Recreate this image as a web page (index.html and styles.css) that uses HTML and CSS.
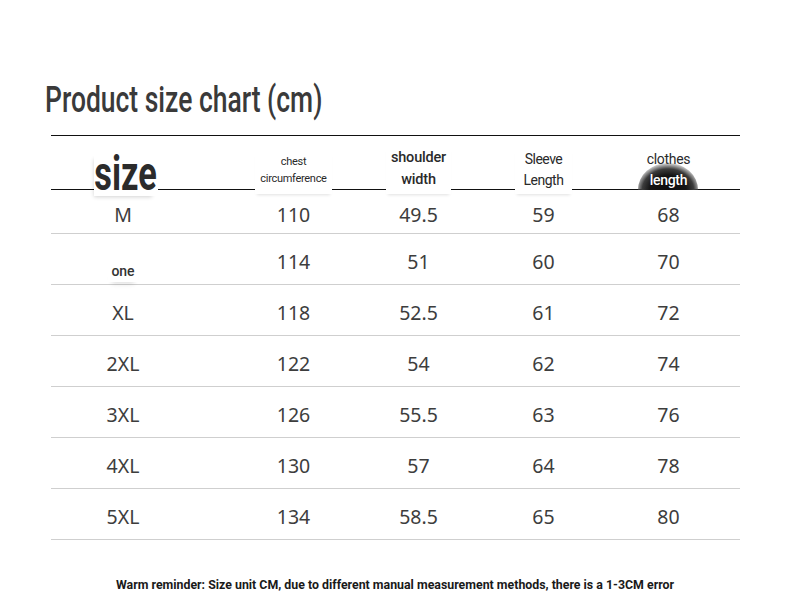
FILE: index.html
```html
<!DOCTYPE html>
<html lang="en">
<head>
<meta charset="utf-8">
<title>Product size chart</title>
<link rel="stylesheet" href="styles.css">
</head>
<body>
<main class="page">
  <h1 class="title"><span class="squeeze">Product size chart (cm)</span></h1>
  <div class="chart">
    <div class="row head">
      <div class="cell first"><span class="lbl big"><span class="squeeze-big">size</span></span></div>
      <div class="cell"><span class="lbl tiny">chest<br>circumference</span></div>
      <div class="cell"><span class="lbl mid">shoulder<br>width</span></div>
      <div class="cell"><span class="lbl small">Sleeve<br>Length</span></div>
      <div class="cell"><span class="lbl small clothes">clothes<br><span class="mound">length</span></span></div>
    </div>
    <div class="row data top">
      <div class="cell first">M</div><div class="cell">110</div><div class="cell">49.5</div><div class="cell">59</div><div class="cell">68</div>
    </div>
    <div class="row data">
      <div class="cell first"><span class="one">one</span></div><div class="cell">114</div><div class="cell">51</div><div class="cell">60</div><div class="cell">70</div>
    </div>
    <div class="row data">
      <div class="cell first">XL</div><div class="cell">118</div><div class="cell">52.5</div><div class="cell">61</div><div class="cell">72</div>
    </div>
    <div class="row data">
      <div class="cell first">2XL</div><div class="cell">122</div><div class="cell">54</div><div class="cell">62</div><div class="cell">74</div>
    </div>
    <div class="row data">
      <div class="cell first">3XL</div><div class="cell">126</div><div class="cell">55.5</div><div class="cell">63</div><div class="cell">76</div>
    </div>
    <div class="row data">
      <div class="cell first">4XL</div><div class="cell">130</div><div class="cell">57</div><div class="cell">64</div><div class="cell">78</div>
    </div>
    <div class="row data">
      <div class="cell first">5XL</div><div class="cell">134</div><div class="cell">58.5</div><div class="cell">65</div><div class="cell">80</div>
    </div>
  </div>
  <p class="note">Warm reminder: Size unit CM, due to different manual measurement methods, there is a 1-3CM error</p>
</main>
</body>
</html>
```

FILE: styles.css
```css
html, body {
  margin: 0;
  background: #fff;
}

.page {
  padding-top: 80px;
  font-family: Roboto, "Liberation Sans", sans-serif;
}

.title {
  margin: 0 0 0 45px;
  font-size: 36px;
  line-height: 40px;
  font-weight: 500;
  color: #3a3a3a;
  white-space: nowrap;
}

.squeeze {
  display: inline-block;
  transform: scaleX(0.735);
  transform-origin: left center;
}

.chart {
  margin: 15px 0 0 51px;
  width: 689px;
  border-top: 1px solid #111;
}

.row {
  display: grid;
  grid-template-columns: 180px 125px 125px 125px 125px;
}

.head {
  height: 54px;
  background: linear-gradient(#111, #111) left bottom / 100% 1px no-repeat;
  align-items: end;
}

.head .cell {
  display: flex;
  justify-content: center;
  align-items: flex-end;
  height: 100%;
}

.cell.first {
  padding-right: 36px;
}

.head .cell.first {
  padding-right: 30px;
}

.lbl {
  display: inline-block;
  background: #fff;
  text-align: center;
  color: #2a2a2a;
  white-space: nowrap;
  position: relative;
  margin-bottom: -4px;
  box-shadow: 0 3px 3px -2px rgba(0, 0, 0, 0.12);
}

.big {
  font-size: 49px;
  line-height: 44px;
  font-weight: 700;
  color: #2b2b2b;
  margin-bottom: -6px;
  width: 64px;
  height: 44px;
  box-shadow: -3px 4px 4px -3px rgba(0, 0, 0, 0.18);
}

.squeeze-big {
  display: inline-block;
  transform: scaleX(0.7);
  transform-origin: center;
  margin: 0 -15px;
}

.tiny {
  font-size: 11px;
  line-height: 17px;
  letter-spacing: -0.3px;
  padding: 1px 5px 7px;
}

.mid {
  font-size: 14.5px;
  line-height: 22px;
  letter-spacing: -0.2px;
  font-weight: 500;
  padding: 0 5px 3px;
}

.small {
  font-size: 14px;
  line-height: 21px;
  letter-spacing: -0.5px;
  padding: 0 9px 3px;
}

.clothes {
  background: transparent;
  box-shadow: none;
  padding: 0 0 3px;
  letter-spacing: -0.3px;
}

.mound {
  position: relative;
  z-index: 0;
  color: #fff;
  display: inline-block;
  font-weight: 500;
  text-shadow: 0 0 1px #000;
}

.mound::before {
  content: "";
  position: absolute;
  z-index: -1;
  left: -12px;
  right: -11px;
  top: -7px;
  bottom: 1px;
  border-radius: 50% 50% 0 0 / 100% 100% 0 0;
  background: radial-gradient(ellipse 55% 100% at 50% 100%, #0d0d0d 0, #151515 55%, #3c3c3c 78%, rgba(120, 120, 120, 0.25) 100%);
}

.data {
  height: 50px;
  border-bottom: 1px solid #cfcfcf;
  align-items: center;
}

.data.top {
  height: 43px;
}

.data .cell {
  font-family: "Noto Sans", "Open Sans", sans-serif;
  font-size: 19.5px;
  color: #3d3d3d;
  text-align: center;
  padding-top: 5px;
}

.data .cell.first {
  padding-right: 36px;
}

.one {
  display: inline-block;
  font-family: Roboto, sans-serif;
  font-size: 14px;
  font-weight: 500;
  color: #333;
  padding: 0 3px 3px;
  margin-top: 21px;
  box-shadow: 0 6px 5px -4px rgba(0, 0, 0, 0.12);
}

.note {
  margin: 34px 0 0;
  text-align: center;
  font-size: 13.5px;
  line-height: 20px;
  font-weight: 700;
  color: #1a1a1a;
  white-space: nowrap;
  transform: scaleX(0.915);
}
```
